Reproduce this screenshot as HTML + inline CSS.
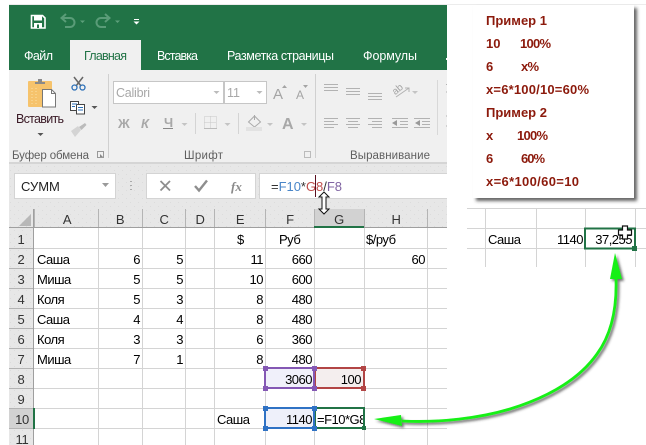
<!DOCTYPE html>
<html><head><meta charset="utf-8"><style>
html,body{margin:0;padding:0;background:#fff;width:646px;height:445px;overflow:hidden}
svg{display:block;font-family:"Liberation Sans",sans-serif}
.c{font-size:13px;letter-spacing:-.5px;fill:#000}
.r{font-size:13px;letter-spacing:-.5px;fill:#000;text-anchor:end}
.h{font-size:13px;letter-spacing:-.3px;fill:#333;text-anchor:middle}
.t{font-size:12.5px;fill:#fff}
.n{font-size:13px;font-weight:bold;fill:#8c1a0c}
</style></head><body>
<svg width="646" height="445" viewBox="0 0 646 445" xmlns="http://www.w3.org/2000/svg">
<defs>
<pattern id="d" width="8" height="8" patternUnits="userSpaceOnUse"><rect width="8" height="8" fill="#e7e7e7"/><rect x="2" y="2" width="1" height="1" fill="#dcdcdc"/><rect x="6" y="6" width="1" height="1" fill="#dcdcdc"/></pattern>
<filter id="s1" x="-20%" y="-20%" width="140%" height="140%"><feDropShadow dx="3" dy="3" stdDeviation="1.6" flood-color="#333" flood-opacity=".75"/></filter>
<filter id="s2" x="-20%" y="-20%" width="140%" height="140%"><feDropShadow dx="2" dy="2" stdDeviation="1.3" flood-color="#333" flood-opacity=".7"/></filter>
</defs>
<rect width="646" height="445" fill="#fff"/>
<rect x="9" y="4" width="637" height="1" fill="#ececec"/>
<!-- title + tabs -->
<rect x="9" y="5" width="438" height="65" fill="#217346"/>
<path d="M31.5 15.5h11l2.500 2.500v10h-13.500z" fill="none" stroke="#fff" stroke-width="1.600"/><rect x="34" y="16" width="8" height="4.500" fill="#fff"/><rect x="34" y="23" width="8" height="5" fill="#fff"/><rect x="37" y="24.500" width="2" height="3.500" fill="#217346"/>
<path d="M62 18h8a4.500 4.500 0 0 1 0 9h-5M66 14l-4.500 4 4.500 4" fill="none" stroke="#5a9c78" stroke-width="2"/>
<path d="M80 20.500h5l-2.500 2.500z" fill="#5d9f7b"/>
<path d="M109 18h-8a4.500 4.500 0 0 0 0 9h5M105 14l4.500 4-4.500 4" fill="none" stroke="#5a9c78" stroke-width="2"/>
<path d="M115 20.500h5l-2.500 2.500z" fill="#5d9f7b"/>
<rect x="134" y="19" width="5" height="1" fill="#fff"/><path d="M133.500 21.500h6l-3 3z" fill="#fff"/>
<rect x="70" y="40" width="71" height="30" fill="#f0f0f0"/>
<text class="t" x="24" y="60" textLength="29">Файл</text>
<text class="t" x="84" y="60" textLength="43" style="fill:#217346">Главная</text>
<text class="t" x="157" y="60" textLength="41">Вставка</text>
<text class="t" x="227" y="60" textLength="107">Разметка страницы</text>
<text class="t" x="363" y="60" textLength="54">Формулы</text>
<rect x="446" y="58" width="1" height="2" fill="#fff"/>
<!-- ribbon -->
<rect x="9" y="70" width="438" height="93" fill="#f0f0f0"/>
<rect x="9" y="162" width="438" height="2" fill="#d5d5d5"/>
<rect x="9" y="164" width="438" height="45" fill="url(#d)"/>
<rect x="108" y="74" width="1" height="84" fill="#d0d0d0"/>
<rect x="315" y="74" width="1" height="84" fill="#d0d0d0"/>
<rect x="437" y="80" width="1" height="55" fill="#d8d8d8"/>
<!-- paste -->
<rect x="28" y="81" width="24" height="26" rx="1" fill="#f6c36c"/>
<path d="M35 84v-2h3v-3h4v3h3v2z" fill="#8a8a8a"/>
<path d="M32 88v17M36 88v17" stroke="#fbe2a8" stroke-width="1" stroke-dasharray="1 2"/>
<path d="M42.500 89.500h9l4 4v13.500h-13z" fill="#fff" stroke="#777"/>
<path d="M51.500 89.500v4h4" fill="none" stroke="#777"/>
<text x="16" y="123" textLength="48" style="font-size:12.500px;fill:#3a1a26">Вставить</text>
<path d="M37.500 133h6l-3 3z" fill="#555"/>
<!-- scissors -->
<path d="M74 77l7 9M83 77l-7 9" stroke="#666" stroke-width="1.500" fill="none"/>
<circle cx="74.500" cy="87.500" r="2.500" fill="none" stroke="#2b6fb7" stroke-width="1.300"/><circle cx="82.500" cy="87.500" r="2.500" fill="none" stroke="#2b6fb7" stroke-width="1.300"/>
<!-- copy -->
<rect x="70.500" y="101.500" width="8" height="9" fill="#fff" stroke="#444"/><rect x="76.500" y="104.500" width="8" height="9.500" fill="#fff" stroke="#444"/>
<path d="M72 104h5M72 106.500h3M78 107.500h5M78 110h5" stroke="#2b6fb7"/>
<path d="M91.500 106h6l-3 3z" fill="#555"/>
<!-- brush -->
<path d="M71 131l7-5 3 4-6 7z" fill="#d4d4d4"/><path d="M79 127l6-4 1.500 2-5 5z" fill="#bbb"/>
<text x="12" y="159" textLength="77" style="font-size:11.500px;fill:#5f5f5f">Буфер обмена</text>
<path d="M97.500 151.500h6v6h-6z" fill="none" stroke="#999"/><path d="M100 154l3 3h-3z" fill="#888"/>
<!-- font -->
<rect x="113.500" y="81.500" width="110" height="22" fill="#fff" stroke="#c6c6c6"/>
<rect x="224.500" y="81.500" width="42" height="22" fill="#fff" stroke="#c6c6c6"/>
<text x="116" y="97" textLength="34" style="font-size:12.500px;fill:#a8a8a8">Calibri</text>
<text x="227" y="97" style="font-size:12.500px;fill:#a8a8a8">11</text>
<path d="M213.500 91h6l-3 3z" fill="#bbb"/><path d="M256.500 91h6l-3 3z" fill="#bbb"/>
<text x="273" y="99" style="font-size:15px;fill:#a4a4a4">А</text><path d="M282 88l2.500-3 2.500 3z" fill="#a4a4a4"/>
<text x="296" y="99" style="font-size:12px;fill:#a4a4a4">А</text><path d="M303 85h5l-2.500 3z" fill="#a4a4a4"/>
<text x="118" y="128" style="font-size:13px;font-weight:bold;fill:#a8a8a8">Ж</text>
<text x="141" y="128" style="font-size:13px;font-weight:bold;font-style:italic;fill:#a8a8a8">К</text>
<text x="164" y="127" style="font-size:13px;font-weight:bold;fill:#a8a8a8">Ч</text><rect x="163" y="128" width="10" height="1" fill="#888"/>
<path d="M181.500 123h6l-3 3z" fill="#c4c4c4"/>
<rect x="195" y="113" width="1" height="21" fill="#d4d4d4"/>
<path d="M204.500 116.500h12v12h-12zM210.500 116.500v12M204.500 122.500h12" fill="none" stroke="#c8c8c8" stroke-dasharray="1 1"/>
<rect x="204" y="128" width="13" height="1" fill="#bbb"/>
<path d="M224.500 123h6l-3 3z" fill="#c4c4c4"/>
<rect x="238" y="113" width="1" height="21" fill="#d4d4d4"/>
<path d="M248.500 122l6-6 6 6-6 5z" fill="none" stroke="#aaa"/><rect x="254" y="115" width="1" height="5" fill="#aaa"/><rect x="246" y="127" width="16" height="4" fill="#e2e2e2"/>
<path d="M267 123h6l-3 3z" fill="#c4c4c4"/>
<text x="282" y="129" style="font-size:16px;font-weight:bold;fill:#a8a8a8">А</text>
<path d="M301 123h6l-3 3z" fill="#c4c4c4"/>
<text x="184" y="159" textLength="39" style="font-size:11.500px;fill:#5f5f5f">Шрифт</text>
<path d="M304.500 151.500h6v6h-6z" fill="none" stroke="#bbb"/>
<!-- alignment -->
<g stroke="#b2b2b2" stroke-width="1" fill="none">
<path d="M324 84.500h14M324 87.500h14M324 90.500h14"/>
<path d="M346 88.500h14M346 91.500h14M346 94.500h14"/>
<path d="M368 93.500h14M368 96.500h14M368 99.500h14"/>
<path d="M324 118.500h14M324 121.500h10M324 124.500h14M324 127.500h10"/>
<path d="M346 118.500h14M348 121.500h10M346 124.500h14M348 127.500h10"/>
<path d="M368 118.500h14M372 121.500h10M368 124.500h14M372 127.500h10"/>
<path d="M392 118.500h16M400 121.500h8M400 124.500h8M392 127.500h16"/>
<path d="M414 118.500h16M422 121.500h8M422 124.500h8M414 127.500h16"/>
<path d="M396 97l13-9M405 88h4v4"/>
<path d="M446 84.500h1M446 92h1M446 116h1M446 126h1"/>
</g>
<text x="393" y="91" transform="rotate(-40 400 90)" style="font-size:10px;fill:#a4a4a4">ab</text>
<path d="M412 91h6l-3 3z" fill="#c4c4c4"/>
<path d="M392 123l5-3v6zM420 120l-5 3 5 3z" fill="#999"/>
<text x="350" y="159" textLength="80" style="font-size:11.500px;fill:#5f5f5f">Выравнивание</text>
<!-- formula bar -->
<rect x="14.500" y="173.500" width="101" height="25" fill="#fff" stroke="#d4d4d4"/>
<text x="21" y="191" style="font-size:13px;fill:#222">СУММ</text>
<path d="M102 183h7l-3.500 4z" fill="#9a9a9a"/>
<path d="M131 181v1M131 185v1M131 189v1" stroke="#aaa" stroke-width="2"/>
<rect x="146.500" y="173.500" width="109" height="25" fill="#fff" stroke="#d4d4d4"/>
<path d="M160.500 181l9.500 9.500M170 181l-9.500 9.500" stroke="#8e8e8e" stroke-width="1.800"/>
<path d="M195 186l4 4.500 8-10" stroke="#8e8e8e" stroke-width="2.400" fill="none"/>
<text x="231" y="191" style="font-family:'Liberation Serif',serif;font-style:italic;font-weight:bold;font-size:13px;fill:#8a8a8a">fx</text>
<rect x="259" y="173" width="188" height="26" fill="#d4d4d4"/>
<rect x="260" y="174" width="187" height="24" fill="#fff"/>
<text x="271" y="191" textLength="71" style="font-size:13px;fill:#333">=<tspan fill="#4a86c8">F10</tspan>*<tspan fill="#c0504d">G8</tspan>/<tspan fill="#8064a2">F8</tspan></text>
<rect x="315" y="175" width="1" height="22" fill="#5a1020"/>
<!-- grid -->
<rect x="9" y="209" width="438" height="19" fill="url(#d)"/>
<rect x="9" y="228" width="25" height="217" fill="url(#d)"/>
<rect x="34" y="228" width="413" height="217" fill="#fff"/>
<rect x="314" y="209" width="50" height="19" fill="#d2d2d2"/>
<rect x="9" y="408" width="25" height="20" fill="#d2d2d2"/>
<path d="M31 214v12h-12z" fill="#b8b8b8"/>
<g fill="#d4d4d4">
<rect x="34" y="248" width="413" height="1"/><rect x="34" y="268" width="413" height="1"/><rect x="34" y="288" width="413" height="1"/><rect x="34" y="308" width="413" height="1"/><rect x="34" y="328" width="413" height="1"/><rect x="34" y="348" width="413" height="1"/><rect x="34" y="368" width="413" height="1"/><rect x="34" y="388" width="413" height="1"/><rect x="34" y="408" width="413" height="1"/><rect x="34" y="428" width="413" height="1"/>
<rect x="98" y="228" width="1" height="217"/><rect x="142" y="228" width="1" height="217"/><rect x="185" y="228" width="1" height="217"/><rect x="214" y="228" width="1" height="217"/><rect x="265" y="228" width="1" height="217"/><rect x="314" y="228" width="1" height="217"/><rect x="364" y="228" width="1" height="217"/><rect x="427" y="228" width="1" height="217"/>
</g>
<g fill="#b4b4b4">
<rect x="34" y="209" width="1" height="19"/><rect x="98" y="209" width="1" height="19"/><rect x="142" y="209" width="1" height="19"/><rect x="185" y="209" width="1" height="19"/><rect x="214" y="209" width="1" height="19"/><rect x="265" y="209" width="1" height="19"/><rect x="314" y="209" width="1" height="19"/><rect x="364" y="209" width="1" height="19"/><rect x="427" y="209" width="1" height="19"/>
<rect x="9" y="248" width="25" height="1"/><rect x="9" y="268" width="25" height="1"/><rect x="9" y="288" width="25" height="1"/><rect x="9" y="308" width="25" height="1"/><rect x="9" y="328" width="25" height="1"/><rect x="9" y="348" width="25" height="1"/><rect x="9" y="368" width="25" height="1"/><rect x="9" y="388" width="25" height="1"/><rect x="9" y="408" width="25" height="1"/><rect x="9" y="428" width="25" height="1"/>
</g>
<rect x="9" y="227" width="438" height="1" fill="#9f9f9f"/>
<rect x="33" y="209" width="1" height="236" fill="#9f9f9f"/>
<rect x="314" y="226" width="50" height="2" fill="#217346"/>
<rect x="33" y="408" width="2" height="21" fill="#217346"/>
<text class="h" x="67" y="224">A</text><text class="h" x="120" y="224">B</text><text class="h" x="164" y="224">C</text><text class="h" x="200" y="224">D</text><text class="h" x="240" y="224">E</text><text class="h" x="290" y="224">F</text><text class="h" x="339" y="224">G</text><text class="h" x="396" y="224">H</text>
<text class="h" x="21" y="244">1</text><text class="h" x="21" y="264">2</text><text class="h" x="21" y="284">3</text><text class="h" x="21" y="304">4</text><text class="h" x="21" y="324">5</text><text class="h" x="21" y="344">6</text><text class="h" x="21" y="364">7</text><text class="h" x="21" y="384">8</text><text class="h" x="21" y="404">9</text><text class="h" x="22" y="424">10</text><text class="h" x="22" y="444">11</text>
<text class="c" x="237" y="244">$</text><text class="c" x="279" y="244">Руб</text><text class="c" x="366" y="244">$/руб</text>
<text class="c" x="37" y="264">Саша</text><text class="r" x="140" y="264">6</text><text class="r" x="183" y="264">5</text><text class="r" x="263" y="264">11</text><text class="r" x="312" y="264">660</text><text class="r" x="425" y="264">60</text>
<text class="c" x="37" y="284">Миша</text><text class="r" x="140" y="284">5</text><text class="r" x="183" y="284">5</text><text class="r" x="263" y="284">10</text><text class="r" x="312" y="284">600</text>
<text class="c" x="37" y="304">Коля</text><text class="r" x="140" y="304">5</text><text class="r" x="183" y="304">3</text><text class="r" x="263" y="304">8</text><text class="r" x="312" y="304">480</text>
<text class="c" x="37" y="324">Саша</text><text class="r" x="140" y="324">4</text><text class="r" x="183" y="324">4</text><text class="r" x="263" y="324">8</text><text class="r" x="312" y="324">480</text>
<text class="c" x="37" y="344">Коля</text><text class="r" x="140" y="344">3</text><text class="r" x="183" y="344">3</text><text class="r" x="263" y="344">6</text><text class="r" x="312" y="344">360</text>
<text class="c" x="37" y="364">Миша</text><text class="r" x="140" y="364">7</text><text class="r" x="183" y="364">1</text><text class="r" x="263" y="364">8</text><text class="r" x="312" y="364">480</text>
<!-- ranges -->
<rect x="266" y="369" width="48" height="19" fill="#f0f0fa"/>
<rect x="315" y="369" width="49" height="19" fill="#f4eeee"/>
<rect x="266" y="409" width="48" height="19" fill="#eef0fa"/>
<text class="r" x="312" y="384">3060</text><text class="r" x="361" y="384">100</text>
<text class="c" x="217" y="424">Саша</text><text class="r" x="312" y="424">1140</text>
<rect x="315" y="409" width="49" height="19" fill="#fff"/>
<svg x="316" y="409" width="47" height="19"><text class="c" x="1" y="15">=F10*G8/F8</text></svg>
<rect x="315" y="368" width="49" height="20" fill="none" stroke="#b24545" stroke-width="2"/>
<rect x="265" y="368" width="49" height="20" fill="none" stroke="#8458b4" stroke-width="2"/>
<rect x="315" y="408" width="49" height="20" fill="none" stroke="#217346" stroke-width="2"/>
<rect x="265" y="408" width="49" height="20" fill="none" stroke="#2f72c4" stroke-width="2"/>
<g fill="#b24545"><rect x="361" y="366" width="5" height="5"/><rect x="361" y="386" width="5" height="5"/></g>
<g fill="#8458b4"><rect x="263" y="366" width="5" height="5"/><rect x="312" y="366" width="5" height="5"/><rect x="263" y="386" width="5" height="5"/><rect x="312" y="386" width="5" height="5"/></g>
<g fill="#2f72c4"><rect x="263" y="406" width="5" height="5"/><rect x="312" y="406" width="5" height="5"/><rect x="263" y="426" width="5" height="5"/><rect x="312" y="426" width="5" height="5"/></g>
<rect x="362" y="426" width="4" height="4" fill="#217346"/>
<!-- resize cursor -->
<path d="M324 192l5 5h-3v12h3l-5 5-5-5h3v-12h-3z" fill="#fff" stroke="#111" stroke-width="1"/>
<!-- note -->
<rect x="473" y="5" width="161" height="193" fill="#fff" filter="url(#s1)"/>
<text class="n" x="486" y="25" textLength="61">Пример 1</text>
<text class="n" x="486" y="48">10</text><text class="n" x="520" y="48" textLength="31">100%</text>
<text class="n" x="486" y="71">6</text><text class="n" x="521" y="71" textLength="18">x%</text>
<text class="n" x="486" y="94" textLength="103">x=6*100/10=60%</text>
<text class="n" x="486" y="117" textLength="61">Пример 2</text>
<text class="n" x="486" y="140">x</text><text class="n" x="517" y="140" textLength="31">100%</text>
<text class="n" x="486" y="163">6</text><text class="n" x="521" y="163" textLength="24">60%</text>
<text class="n" x="486" y="186" textLength="93">x=6*100/60=10</text>
<!-- right table -->
<g fill="#d4d4d4">
<rect x="467" y="208" width="179" height="1"/><rect x="467" y="228" width="179" height="1"/><rect x="467" y="248" width="179" height="1"/>
<rect x="485" y="208" width="1" height="59"/><rect x="536" y="208" width="1" height="59"/><rect x="585" y="208" width="1" height="59"/><rect x="635" y="208" width="1" height="59"/>
</g>
<text class="c" x="488" y="244">Саша</text><text class="r" x="583" y="244">1140</text><text class="r" x="632" y="244">37,255</text>
<rect x="585" y="228.500" width="50" height="20" fill="none" stroke="#217346" stroke-width="2"/>
<rect x="632" y="246" width="5" height="5" fill="#217346"/>
<path d="M622.500 226h5v4h4v5h-4v4h-5v-4h-4v-5h4z" fill="#fff" stroke="#111" stroke-width="1.200"/>
<!-- arrow -->
<g filter="url(#s2)">
<path d="M616 279C617 310 611 335 597 354C580 378 552 396 510 409C480 418 440 423 402 421" fill="none" stroke="#13f013" stroke-width="2.800"/>
<path d="M615 253L622 279L610 279z" fill="#13f013"/>
<path d="M374 419L401 415L402 426z" fill="#13f013"/>
</g>
</svg>
</body></html>
